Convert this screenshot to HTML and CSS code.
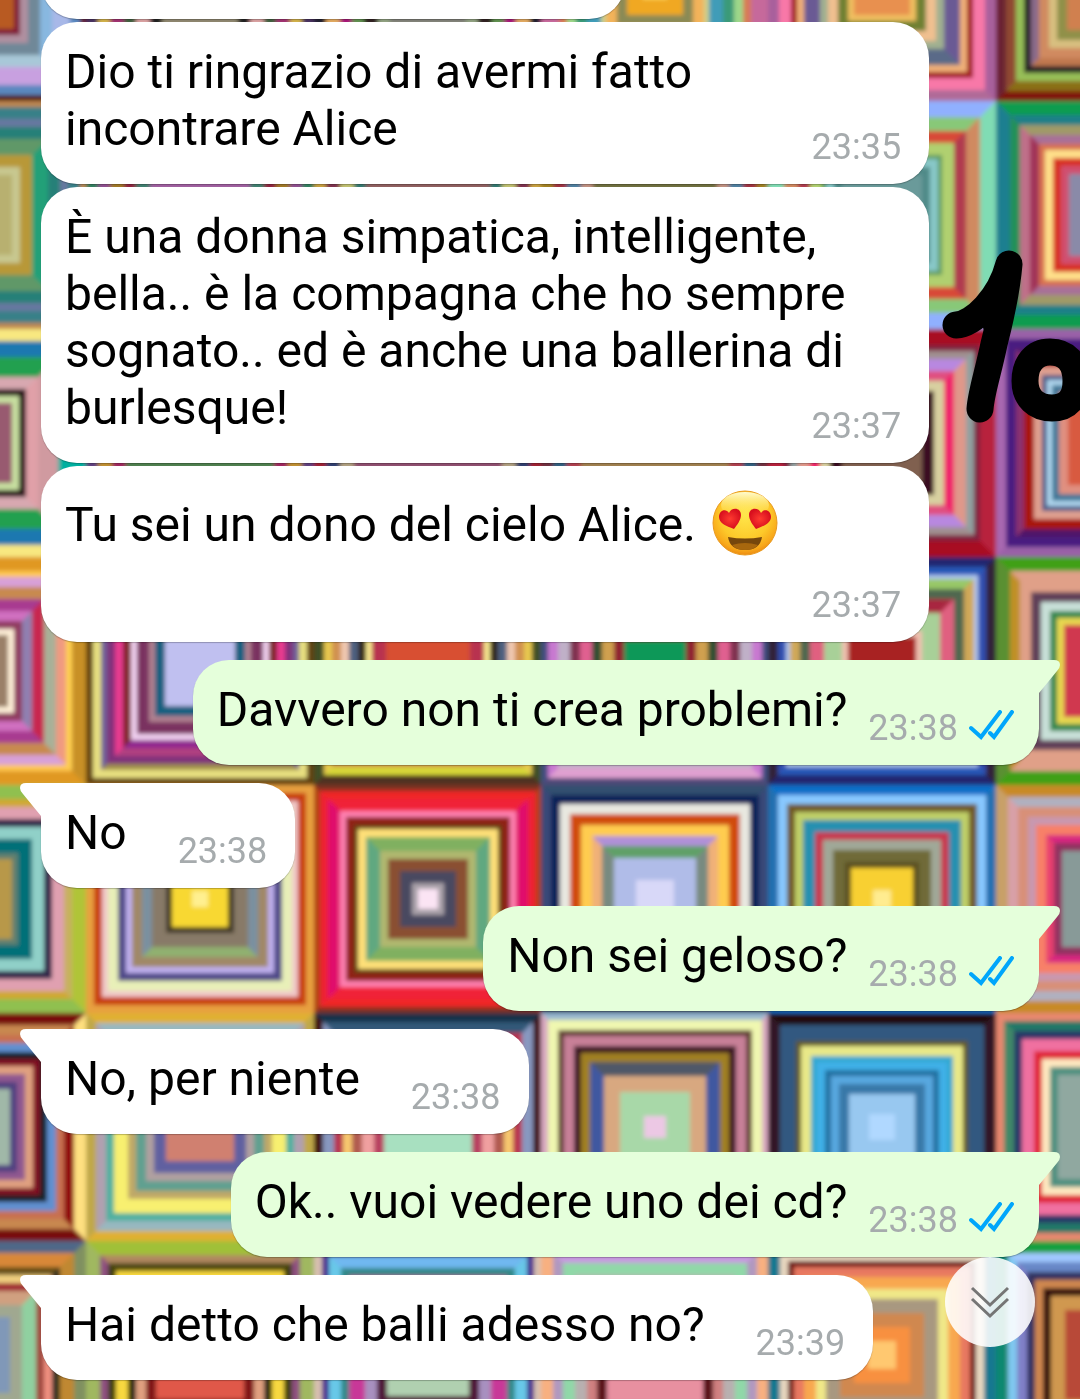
FILE: index.html
```html
<!DOCTYPE html>
<html lang="it">
<head>
  <meta charset="UTF-8">
  <meta name="viewport" content="width=device-width, initial-scale=1">
  <title>Chat</title>
  <link rel="stylesheet" href="styles.css">
</head>
<body>
  <svg class="wallpaper" id="wallpaper" viewBox="0 0 1080 1399" preserveAspectRatio="xMidYMin slice" aria-hidden="true"></svg>

  <svg class="hidden-icons" aria-hidden="true">
    <symbol id="tail" viewBox="0 0 22 34">
      <path d="M22 0H6Q0 0 0 5Q0 8 3 11L21 33H22Z"/>
    </symbol>
    <symbol id="ticks" viewBox="0 0 46 30">
      <path d="M2 18L12 27L31 2M21 23L25 27L43 2" fill="none" stroke="#00a6fb" stroke-width="4" stroke-linecap="round"/>
    </symbol>
  </svg>

  <main class="chat">
    <div class="bubble cut"></div>

    <div class="bubble in">
      <p class="text">Dio ti ringrazio di avermi fatto incontrare Alice<span class="meta"><time>23:35</time></span></p>
    </div>

    <div class="bubble in">
      <p class="text">È una donna simpatica, intelligente, bella.. è la compagna che ho sempre sognato.. ed è anche una ballerina di burlesque!<span class="meta"><time>23:37</time></span></p>
    </div>

    <div class="bubble in">
      <p class="text">Tu sei un dono del cielo Alice.
        <svg class="emoji" viewBox="0 0 66 66" role="img" aria-label="😍">
          <defs>
            <radialGradient id="face" cx="50%" cy="38%" r="64%">
              <stop offset="0" stop-color="#ffe64a"/>
              <stop offset="0.6" stop-color="#fdc92a"/>
              <stop offset="0.85" stop-color="#f8a81a"/>
              <stop offset="1" stop-color="#ea8410"/>
            </radialGradient>
            <linearGradient id="shine" x1="0" y1="0" x2="0" y2="1">
              <stop offset="0" stop-color="#fffbd0"/>
              <stop offset="1" stop-color="#ffe64a" stop-opacity="0"/>
            </linearGradient>
            <radialGradient id="heart">
              <stop offset="0" stop-color="#ff3b30"/>
              <stop offset="1" stop-color="#d80f1e"/>
            </radialGradient>
          </defs>
          <circle cx="33" cy="33" r="32" fill="url(#face)" stroke="#e99a20"/>
          <ellipse cx="33" cy="15" rx="24" ry="13" fill="url(#shine)"/>
          <path d="M22 39C14 36 7 33 7 27C7 20 14 18 17 23C19 17 29 17 29 25C29 30 25 35 22 39Z" fill="url(#heart)"/>
          <path d="M44 39C52 36 59 33 59 27C59 20 52 18 49 23C47 17 37 17 37 25C37 30 41 35 44 39Z" fill="url(#heart)"/>
          <path d="M16 47Q33 50 50 47Q48 60 33 60Q18 60 16 47Z" fill="#76470c"/>
          <path d="M20 55Q33 51 46 55Q42 60 33 60Q24 60 20 55Z" fill="#a8670e"/>
        </svg><span class="meta"><time>23:37</time></span></p>
    </div>

    <div class="bubble out tailed">
      <svg class="tail" aria-hidden="true"><use href="#tail"/></svg>
      <p class="text">Davvero non ti crea problemi?<span class="meta"><time>23:38</time><svg class="ticks" role="img" aria-label="Letto"><use href="#ticks"/></svg></span></p>
    </div>

    <div class="bubble in tailed">
      <svg class="tail" aria-hidden="true"><use href="#tail"/></svg>
      <p class="text">No<span class="meta"><time>23:38</time></span></p>
    </div>

    <div class="bubble out tailed">
      <svg class="tail" aria-hidden="true"><use href="#tail"/></svg>
      <p class="text">Non sei geloso?<span class="meta"><time>23:38</time><svg class="ticks" role="img" aria-label="Letto"><use href="#ticks"/></svg></span></p>
    </div>

    <div class="bubble in tailed">
      <svg class="tail" aria-hidden="true"><use href="#tail"/></svg>
      <p class="text">No, per niente<span class="meta"><time>23:38</time></span></p>
    </div>

    <div class="bubble out tailed">
      <svg class="tail" aria-hidden="true"><use href="#tail"/></svg>
      <p class="text">Ok.. vuoi vedere uno dei cd?<span class="meta"><time>23:38</time><svg class="ticks" role="img" aria-label="Letto"><use href="#ticks"/></svg></span></p>
    </div>

    <div class="bubble in tailed">
      <svg class="tail" aria-hidden="true"><use href="#tail"/></svg>
      <p class="text">Hai detto che balli adesso no?<span class="meta"><time>23:39</time></span></p>
    </div>
  </main>

  <!-- scarabocchio a mano -->
  <svg class="doodle" viewBox="0 0 140 176" role="img" aria-label="10">
    <g fill="none" stroke="#000" stroke-width="27" stroke-linecap="round" stroke-linejoin="round">
      <path d="M16 77C34 76 60 50 69 16C66 50 58 80 54 96C48 125 41 145 40 161"/>
      <path d="M54 60L56 76"/>
      <path d="M110 104C94 104 85 116 85 133C85 150 96 160 112 160C128 160 136 150 136 133C136 114 126 104 110 104Z"/>
    </g>
  </svg>

  <button class="scroll-down" type="button" aria-label="Vai in fondo">
    <svg viewBox="0 0 40 34" width="40" height="34" aria-hidden="true">
      <path d="M2 3L20 20L38 3M2 14L20 31L38 14" fill="none" stroke="#757575" stroke-width="3"/>
    </svg>
  </button>

  <script src="wallpaper.js"></script>
</body>
</html>
```
FILE: styles.css
```css
* {
  box-sizing: border-box;
}

body {
  margin: 0;
  min-height: 100vh;
  overflow: hidden;
  position: relative;
  background-color: #8a6a70;
  font-family: Roboto, "Liberation Sans", sans-serif;
  color: #000;
}

.wallpaper {
  position: fixed;
  inset: 0;
  width: 100%;
  height: 100%;
  z-index: -1;
}

.hidden-icons {
  position: absolute;
  width: 0;
  height: 0;
}

.chat {
  display: flex;
  flex-direction: column;
  align-items: flex-start;
  gap: 3px;
  padding: 0 41px 19px;
}

.bubble {
  position: relative;
  max-width: 89%;
  padding: 21px 28px 19px 24px;
  border-radius: 36px;
  background-color: #fff;
  color: #fff;
  box-shadow: 0 1px 1px rgba(0, 0, 0, 0.25);
}

.cut {
  width: 584px;
  height: 105px;
  margin-top: -86px;
}

.out {
  align-self: flex-end;
  padding-right: 24px;
  background-color: #e5ffdb;
  color: #e5ffdb;
}

.tailed {
  margin-top: 15px;
}

.in.tailed {
  border-top-left-radius: 0;
}

.out.tailed {
  border-top-right-radius: 0;
}

.tail {
  position: absolute;
  top: 0;
  left: -21px;
  width: 22px;
  height: 34px;
  fill: currentColor;
}

.out .tail {
  left: auto;
  right: -21px;
  transform: scaleX(-1);
}

.text {
  display: flow-root;
  margin: 0;
  font-size: 48px;
  line-height: 57px;
  color: #000;
}

.emoji {
  width: 66px;
  height: 66px;
  margin: 3px 2px 2px 4px;
  vertical-align: -17px;
}

/* L'orario va in coda all'ultima riga, o sotto se non c'e' posto */
.meta {
  float: right;
  display: flex;
  align-items: center;
  gap: 11px;
  margin: 29px 0 0 51px;
  font-size: 36px;
  line-height: 36px;
  color: #a6abad;
}

.out .meta {
  margin-left: 21px;
}

.ticks {
  width: 46px;
  height: 30px;
  margin-bottom: 6px;
}

.doodle {
  position: absolute;
  top: 248px;
  right: 0;
  width: 140px;
  height: 176px;
}

.scroll-down {
  position: fixed;
  right: 45px;
  bottom: 52px;
  width: 90px;
  height: 90px;
  padding: 0;
  display: flex;
  align-items: center;
  justify-content: center;
  border: none;
  border-radius: 50%;
  background-color: rgba(255, 255, 255, 0.88);
  cursor: pointer;
}
```
FILE: wallpaper.js
```js
// Sfondo a quadrati concentrici.
// Ogni anello: spessore + colore dei lati, opzionale /colore di sopra e sotto.
// L'ultimo colore riempie il centro.
const rows = [
  [
    "6#6a2030/#500800 10#5a88c0 18#a8b8e8/#c8a0e0 12#88b8e0/#a8c8d8 12#708898 8#b090a0 6#801838 #b85a20",
    "12#483060 12#d0b048 14#a03070 12#406040 14#d8a0a0 12#202020 #908870",
    "12#202030 14#e0a860 12#a81878 12#609050 14#302020 12#90a080 #808078",
    "18#c6699b 8#d87a55 9#9dd88a 11#3b9a78 14#3f9cb8 5#cdd08a 11#f3b35a 10#8a8a55 16#f0a820 #ffe060",
    "11#a8609c/#b06a98 12#f878a8 6#a01818 7#f0b078 16#6a5a94/#5a6a88 8#a0b090 10#f0c090 10#708030 6#f0c060 #e89050",
    "10#6a2030/#801808 10#904a30/#8a7018 8#98c058 7#202028 8#8a6a8a/#c07850 10#d08a60 8#d8c080 10#90904a #d08050"
  ],
  [
    "6#c08850 12#388088 8#6878a0 12#288078 16#20a078/#609868 12#b89838 8#c8c890 #b8b070",
    "12#308060 12#905090 14#a07828 12#902040 14#408070 #a060a0",
    "12#c8a040 14#803050 14#c0c070 12#307870 #906060",
    "12#a08020 14#a03040 14#5080a0 12#c09080 #707040",
    "16#80dcb4/#90b0ff 14#d08a60/#88c878 12#b03a50/#d84838 12#b0d070 4#5a9a60 8#88c8c8 8#508a88 #6a9a9a",
    "14#1f7f90/#0c9c50 10#209058/#1f8088 10#c0708a/#a09a68 9#a03058/#a87098 6#d87050 8#ffe08a 8#d83020 8#d05070 #8a8aa8"
  ],
  [
    "12#00b0a0/#f8e880 16#00b0a0/#1a78b0 20#d09aa0/#20a050 12#e0a0a8/#d8a8b0 7#201008 7#c8e0a0 #985a70",
    "12#604080 14#c09030 14#a02860 #508050",
    "12#a02030 14#304070 14#b0a080 #905070",
    "12#703040 14#306080 14#b04050 #a08050",
    "16#b8203c/#a81020 6#802040 8#90a0a0/#a09090 12#e0988a/#b888e0 10#f0206c/#e05080 10#d8d0a0 12#3a1020 #806050",
    "10#a868b0/#9a60a8 10#4a1a80 8#8a3070/#501868 10#a81808 8#e0a090 5#4a5a88 5#b0d8f0 7#407898 9#e09080 #d85a40"
  ],
  [
    "14#c89028/#e09820 6#ffd050/#ffc850 10#f09a80/#d8a0d8 12#a8b098/#c88a50 12#c82850/#a83a90 10#9080b0/#d070c0 8#903a60 6#fff0d8 #9a8068",
    "7#604008 8#e8e080 6#70609a/#a09048 8#80307a 8#e83a90/#b04080 8#802828/#902890 6#f0d0f0 12#7a3060 6#b08090 10#186080 #c0c0f0",
    "10#405028/#503020 8#e8c850/#d8d838 9#d09050 8#f0c8b0 9#506080 8#302818 6#f8e890 14#b83050 #d85030",
    "7#405080/#504878 10#c878d0/#e0a0d0 12#c0b0c8 10#803050 12#e06090 10#305030 12#d0a050 10#902030 #109858",
    "10#302038/#202870 8#3050b0/#2858b8 4#b0c8f0 10#d0a858/#98c868 10#506850 14#e06080/#a82840 18#a8d098 6#f0c0b0 #a82020",
    "14#5a9030/#40a018 10#c09028/#e0a088 11#e0a088 10#604058 9#c8e0d8 7#308850 7#e8d850 #d03850"
  ],
  [
    "14#b0c438/#90c050 8#c8b060/#d0a830 12#e0a0b0 8#302848 12#90d0c8 14#007078 6#608070 #b89848",
    "8#e8a040 8#c83c10 6#f0c8c8 10#e8f0b8 8#504a88 6#c0b0f0 10#a08868 10#7a90a0/#90b070 14#887a68 6#403828 20#f8d830 #fff090",
    "6#b04010/#803020 8#ee2030/#f02828 12#e0106c/#f02038 6#ff80b0 8#902018 4#604010 8#ffe078 14#60a880/#80b060 8#b0b870 12#8a5030 12#484860 6#a8a0a8 #fbe4f4",
    "10#384878/#305070 9#102058 10#e8e8e0 11#d04c08 11#ffcc50 10#f0b078/#b090d8 12#788a80/#60a068 22#b0bce8 #d8d8f8",
    "10#2070b0/#0a70c8 9#88c8ff 8#705828 8#c0d068 12#2890b0 8#c83850 10#a0a898 12#706a38 6#5a5020 22#f8d030 #ffec90",
    "12#c8a068/#c88a28 10#d8a0a8/#b0b0c0 10#d89078 8#c898b0 10#f88068 8#e84070/#d82880 8#903060 #889a98"
  ],
  [
    "12#ffe080/#781008 10#901010/#c88850 8#c87050 9#6090d0 7#182028 7#801020 8#e0a080 8#905890 7#504080 #a0b8a8",
    "10#c0a848/#e0b030 10#b0a0b0/#98b8c0 8#50b0a0 14#f8f070 8#c0a868 10#60a090 8#b0a0a0 12#6060a0 #d08070",
    "9#401010/#183048 11#8898c0/#305878 9#b83050 9#f8c870 10#b05a50 12#f0a0a0 10#b84060 #a8e0c0",
    "7#d8a8c0/#98b8d0 10#f0f8b0 6#604030 10#c88098 7#3a1820 9#a08020 14#4058a0/#505868 16#d8a880 24#a8d8a8 #ecc8e4",
    "12#301828/#201010 16#305880 5#605820 10#e8e888 6#30a8d0 8#40b0e8 6#2070a0 8#58a8e0 10#3878a8 20#98c8f0 #b0d8ff",
    "8#e88870 10#408868/#207868 8#283868 12#f070a0 8#e02838 8#ffe8c0 8#509080 #90a8a0"
  ],
  [
    "12#809060/#506888 14#c08830/#d88838 8#303020/#685018 8#f09080/#f0d080 8#a04840/#a02830 14#90d0a0/#d0a080 12#a0a890 #8098b8",
    "14#a0b860/#a0c038 8#905080/#b08860 8#404010/#504808 12#f8d840 8#282808 10#e0a080 10#801818 #e05848",
    "8#d8c0b0/#a0a070 7#482890/#503878 12#68c8e8/#70b8f0 8#308888 16#c83898 12#a890c0 10#501838 #b0d0b0",
    "12#f8b080 10#b098c0/#c898e0 12#90d8a8 12#b8b0b0 10#d08080 10#580c18 #e890a0",
    "12#187890/#604848 8#e8d8c0 6#701010 10#e87860 12#f8a850 10#f0e888 14#a89880 14#d08850 14#f89040 #ffc870",
    "12#108870/#18a040 9#80c8f0/#a0c8ff 10#8080c8/#6888c8 8#303060 8#d08850 8#301008 14#d09850 #b84838"
  ]
];

const NS = "http://www.w3.org/2000/svg";
const svg = document.getElementById("wallpaper");
const columns = [-142, 86, 314, 541, 768, 996];
const top0 = -127;
const size = 228;

function shape(name, attrs) {
  const el = document.createElementNS(NS, name);
  for (const key in attrs) {
    el.setAttribute(key, attrs[key]);
  }
  group.appendChild(el);
}

// l'immagine di sfondo e' ingrandita, quindi i bordi sono morbidi
svg.innerHTML = '<filter id="soft" x="0" y="0" width="1" height="1"><feGaussianBlur stdDeviation="2"/></filter>';
const group = document.createElementNS(NS, "g");
group.setAttribute("filter", "url(#soft)");
svg.appendChild(group);

rows.forEach((row, r) => {
  row.forEach((tile, c) => {
    let inset = 0;
    tile.split(" ").forEach(ring => {
      const width = parseInt(ring) || 0;
      const [side, cap] = ring.slice(ring.indexOf("#")).split("/");
      const x = columns[c] + inset;
      const y = top0 + r * size + inset;
      const s = size - inset * 2;
      shape("rect", { x: x, y: y, width: s, height: s, fill: side });
      if (cap) {
        shape("path", { d: `M${x} ${y}h${s}L${x} ${y + s}h${s}Z`, fill: cap });
      }
      inset += width;
    });
  });
});
```
